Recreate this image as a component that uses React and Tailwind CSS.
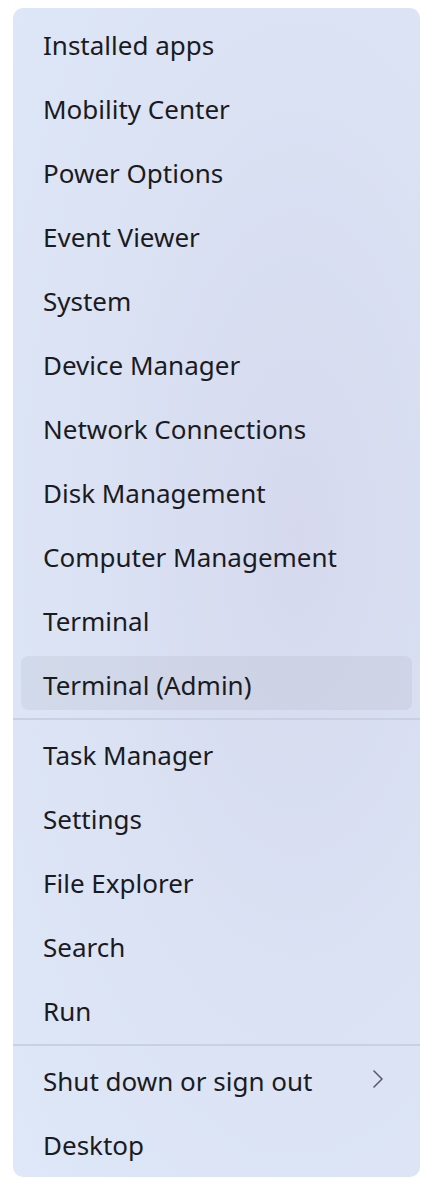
const groups = [
  [
    "Installed apps",
    "Mobility Center",
    "Power Options",
    "Event Viewer",
    "System",
    "Device Manager",
    "Network Connections",
    "Disk Management",
    "Computer Management",
    "Terminal",
    "Terminal (Admin)",
  ],
  ["Task Manager", "Settings", "File Explorer", "Search", "Run"],
  ["Shut down or sign out", "Desktop"],
];

function Chevron() {
  return (
    <svg width="12" height="18" viewBox="0 0 12 18" className="text-[#5a5d66]">
      <polyline points="2,1 10,9 2,17" fill="none" stroke="currentColor" strokeWidth="1.6" strokeLinecap="round" strokeLinejoin="round" />
    </svg>
  );
}

function MenuItem({ label, active, submenu }) {
  return (
    <div
      className={`mx-2 flex h-[54px] items-center justify-between rounded-[7px] pl-[22px] pr-[28px] ${
        active ? "bg-[#0000000b]" : ""
      }`}
    >
      <span className="pt-1 text-[26px] leading-none text-[#1b1b1f]">{label}</span>
      {submenu && <Chevron />}
    </div>
  );
}

export default function App() {
  return (
    <div className="min-h-screen bg-white pl-[13px] pr-[14px] pt-[8px]" style={{ fontFamily: '"Noto Sans", "Open Sans", sans-serif' }}>
      <div className="rounded-[10px] bg-[radial-gradient(ellipse_at_70%_45%,#d6d9ee_0%,#dae1f3_45%,#dee8f8_100%)] pt-[8px] pb-[7px]">
        {groups.map((items, gi) => (
          <div key={gi}>
            {gi > 0 && <div className="mt-[8px] mb-[6px] h-[2px] bg-[#c9d0e2]" />}
            <div className="flex flex-col gap-[10px]">
              {items.map((label) => (
                <MenuItem
                  key={label}
                  label={label}
                  active={label === "Terminal (Admin)"}
                  submenu={label === "Shut down or sign out"}
                />
              ))}
            </div>
          </div>
        ))}
      </div>
    </div>
  );
}
